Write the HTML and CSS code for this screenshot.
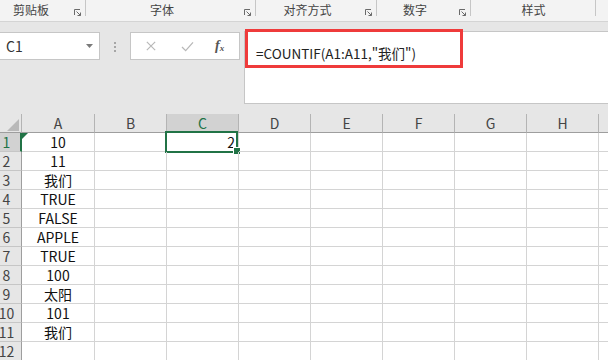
FILE: index.html
```html
<!DOCTYPE html>
<html lang="zh-CN">
<head>
<meta charset="utf-8">
<title>Excel COUNTIF</title>
<link rel="stylesheet" href="styles.css">
</head>
<body>
<div class="ribbon">
  <div class="grp g1"><span class="lbl">剪贴板</span><svg class="launch" viewBox="0 0 8 8"><path d="M0.5 6V0.5H6M2.5 2.5L6.5 6.5M3.5 6.5H6.5V3.5"/></svg></div>
  <div class="grp g2"><span class="lbl">字体</span><svg class="launch" viewBox="0 0 8 8"><path d="M0.5 6V0.5H6M2.5 2.5L6.5 6.5M3.5 6.5H6.5V3.5"/></svg></div>
  <div class="grp g3"><span class="lbl">对齐方式</span><svg class="launch" viewBox="0 0 8 8"><path d="M0.5 6V0.5H6M2.5 2.5L6.5 6.5M3.5 6.5H6.5V3.5"/></svg></div>
  <div class="grp g4"><span class="lbl">数字</span><svg class="launch" viewBox="0 0 8 8"><path d="M0.5 6V0.5H6M2.5 2.5L6.5 6.5M3.5 6.5H6.5V3.5"/></svg></div>
  <div class="grp g5"><span class="lbl">样式</span></div>
  <div class="grp g6"></div>
</div>

<div class="fbar">
  <div class="namebox">
    <span class="name">C1</span>
    <svg class="dd" viewBox="0 0 7 4"><path d="M0 0H7L3.5 4Z"/></svg>
  </div>
  <div class="dots"><i></i><i></i><i></i></div>
  <div class="btns">
    <svg class="ico x" viewBox="0 0 12 12"><path d="M1 1L11 11M11 1L1 11"/></svg>
    <svg class="ico ok" viewBox="0 0 14 12"><path d="M1 6.5L5 10.5L13 1.5"/></svg>
    <span class="fx"><i>f</i><sub>x</sub></span>
  </div>
  <div class="finput">
    <span class="ftext">=COUNTIF(A1:A11,"我们")</span>
    <div class="redbox"></div>
  </div>
</div>

<div class="sheet">
  <div class="ch corner"><svg viewBox="0 0 12 12"><path d="M12 0V12H0Z"/></svg></div>
  <div class="ch">A</div><div class="ch">B</div><div class="ch sel-h">C</div><div class="ch">D</div>
  <div class="ch">E</div><div class="ch">F</div><div class="ch">G</div><div class="ch">H</div><div class="ch last"></div>

  <div class="rh sel-r"><span>1</span></div>
  <div class="c ca"><span class="err"></span>10</div><div class="c"></div><div class="c cr"><div class="sel"><span class="handle"></span></div>2</div><div class="c"></div><div class="c"></div><div class="c"></div><div class="c"></div><div class="c"></div><div class="c last"></div>

  <div class="rh"><span>2</span></div>
  <div class="c ca">11</div><div class="c"></div><div class="c"></div><div class="c"></div><div class="c"></div><div class="c"></div><div class="c"></div><div class="c"></div><div class="c last"></div>

  <div class="rh"><span>3</span></div>
  <div class="c ca">我们</div><div class="c"></div><div class="c"></div><div class="c"></div><div class="c"></div><div class="c"></div><div class="c"></div><div class="c"></div><div class="c last"></div>

  <div class="rh"><span>4</span></div>
  <div class="c ca">TRUE</div><div class="c"></div><div class="c"></div><div class="c"></div><div class="c"></div><div class="c"></div><div class="c"></div><div class="c"></div><div class="c last"></div>

  <div class="rh"><span>5</span></div>
  <div class="c ca">FALSE</div><div class="c"></div><div class="c"></div><div class="c"></div><div class="c"></div><div class="c"></div><div class="c"></div><div class="c"></div><div class="c last"></div>

  <div class="rh"><span>6</span></div>
  <div class="c ca">APPLE</div><div class="c"></div><div class="c"></div><div class="c"></div><div class="c"></div><div class="c"></div><div class="c"></div><div class="c"></div><div class="c last"></div>

  <div class="rh"><span>7</span></div>
  <div class="c ca">TRUE</div><div class="c"></div><div class="c"></div><div class="c"></div><div class="c"></div><div class="c"></div><div class="c"></div><div class="c"></div><div class="c last"></div>

  <div class="rh"><span>8</span></div>
  <div class="c ca">100</div><div class="c"></div><div class="c"></div><div class="c"></div><div class="c"></div><div class="c"></div><div class="c"></div><div class="c"></div><div class="c last"></div>

  <div class="rh"><span>9</span></div>
  <div class="c ca">太阳</div><div class="c"></div><div class="c"></div><div class="c"></div><div class="c"></div><div class="c"></div><div class="c"></div><div class="c"></div><div class="c last"></div>

  <div class="rh"><span>10</span></div>
  <div class="c ca">101</div><div class="c"></div><div class="c"></div><div class="c"></div><div class="c"></div><div class="c"></div><div class="c"></div><div class="c"></div><div class="c last"></div>

  <div class="rh"><span>11</span></div>
  <div class="c ca">我们</div><div class="c"></div><div class="c"></div><div class="c"></div><div class="c"></div><div class="c"></div><div class="c"></div><div class="c"></div><div class="c last"></div>

  <div class="rh"><span>12</span></div>
  <div class="c ca"></div><div class="c"></div><div class="c"></div><div class="c"></div><div class="c"></div><div class="c"></div><div class="c"></div><div class="c"></div><div class="c last"></div>
</div>
</body>
</html>
```

FILE: styles.css
```css
* { box-sizing: border-box; }
html, body {
  margin: 0;
  width: 608px;
  height: 360px;
  overflow: hidden;
  background: #ffffff;
  font-family: "Noto Sans CJK SC", "Noto Sans", sans-serif;
}

/* ribbon group labels */
.ribbon {
  display: flex;
  height: 22px;
  background: #f3f3f3;
  border-bottom: 1px solid #d4d4d4;
}
.grp {
  position: relative;
  display: flex;
  align-items: flex-start;
  height: 21px;
}
.grp::after {
  content: "";
  position: absolute;
  right: 0;
  top: 0;
  width: 1px;
  height: 16px;
  background: #c6c6c6;
}
.g1 { width: 86px; }
.g2 { width: 170px; }
.g3 { width: 121px; }
.g4 { width: 94px; }
.g5 { width: 125px; }
.g6 { flex: 1; }
.g6::after { display: none; }
.lbl {
  flex: 1;
  text-align: center;
  font-size: 12px;
  line-height: 20px;
  color: #444;
  padding-right: 18px;
}
.g1 .lbl { padding-right: 24px; }
.g5 .lbl { padding-right: 0; }
.launch {
  position: absolute;
  right: 4px;
  top: 9px;
  width: 8px;
  height: 8px;
  fill: none;
  stroke: #6a6a6a;
  stroke-width: 1;
}

/* formula bar */
.fbar {
  display: flex;
  align-items: flex-start;
  height: 92px;
  background: #e6e6e6;
  padding-top: 10px;
}
.namebox {
  display: flex;
  align-items: center;
  justify-content: space-between;
  width: 101px;
  height: 28px;
  margin-left: -1px;
  background: #fff;
  border: 1px solid #c6c6c6;
  padding: 0 6px 0 6px;
}
.name {
  font-size: 14px;
  color: #333;
  font-family: "Noto Sans CJK SC", sans-serif;
}
.dd { width: 7px; height: 4px; fill: #7a7a7a; }
.dots {
  display: flex;
  flex-direction: column;
  gap: 2px;
  margin: 10px 0 0 14px;
  width: 2px;
}
.dots i { display: block; width: 2px; height: 2px; background: #a6a6a6; }
.btns {
  display: flex;
  align-items: center;
  width: 110px;
  height: 28px;
  margin-left: 14px;
  background: #fff;
  border: 1px solid #c6c6c6;
}
.ico { fill: none; stroke-width: 1.4; }
.x { width: 10px; height: 10px; stroke: #b8b8b8; margin-left: 15px; }
.ok { width: 13px; height: 11px; stroke: #b8b8b8; margin-left: 25px; }
.fx {
  margin-left: 21px;
  font-family: "Liberation Serif", serif;
  font-size: 14px;
  color: #555;
  font-weight: bold;
  line-height: 1;
}
.fx i { font-style: italic; }
.fx sub { font-size: 9px; font-style: italic; vertical-align: -1px; }
.finput {
  position: relative;
  flex: 1;
  height: 73px;
  margin: -1px -2px 0 4px;
  background: #fff;
  border: 1px solid #c6c6c6;
  padding: 8px 0 0 11px;
}
.ftext {
  font-size: 13.5px;
  color: #222;
  line-height: 16px;
}
.redbox {
  position: absolute;
  left: 0;
  top: -3px;
  width: 218px;
  height: 39px;
  border: 3px solid #ef3b3b;
}

/* sheet */
.sheet {
  display: grid;
  grid-template-columns: 22px 73px repeat(7, 72px) 1fr;
  grid-auto-rows: 19px;
  grid-template-rows: 19px;
  background: #fff;
}
.ch {
  display: flex;
  align-items: flex-end;
  justify-content: center;
  background: #e6e6e6;
  border-right: 1px solid #b4b4b4;
  border-bottom: 1px solid #9e9e9e;
  font-size: 14px;
  line-height: 17px;
  color: #444;
}
.ch.last { border-right: none; }
.corner {
  justify-content: flex-end;
  padding: 0 2px 1px 0;
}
.corner svg { width: 12px; height: 12px; fill: #b9b9b9; }
.sel-h {
  background: #d2d2d2;
  color: #217346;
}
.rh {
  display: flex;
  align-items: flex-end;
  justify-content: flex-start;
  background: #e6e6e6;
  border-right: 1px solid #9e9e9e;
  border-bottom: 1px solid #c6c6c6;
  font-size: 14px;
  line-height: 17px;
  color: #444;
}
.rh span {
  display: flex;
  justify-content: center;
  width: 13px;
  white-space: nowrap;
}
.sel-r {
  background: #d2d2d2;
  color: #217346;
  border-right: 2px solid #217346;
}
.c {
  position: relative;
  display: flex;
  align-items: flex-end;
  border-right: 1px solid #d4d4d4;
  border-bottom: 1px solid #d4d4d4;
  font-size: 14px;
  line-height: 17px;
  color: #111;
}
.c.last { border-right: none; }
.ca { justify-content: center; }
.cr { justify-content: flex-end; padding-right: 3px; }
.err {
  position: absolute;
  left: 0;
  top: 0;
  width: 0;
  height: 0;
  border-top: 6px solid #217346;
  border-right: 6px solid transparent;
}
.sel {
  position: absolute;
  left: -2px;
  top: -2px;
  right: 0;
  bottom: -2px;
  border: 2px solid #217346;
}
.handle {
  position: absolute;
  right: -4px;
  bottom: -3px;
  width: 6px;
  height: 6px;
  background: #217346;
  box-shadow: 0 0 0 1px #fff;
}
```
